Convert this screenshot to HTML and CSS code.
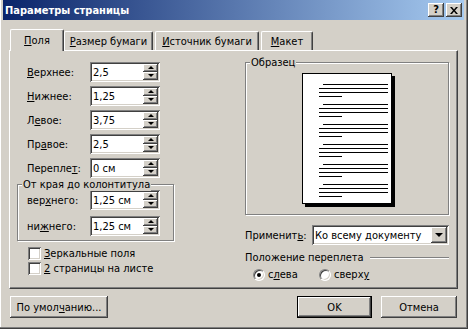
FILE: index.html
```html
<!DOCTYPE html>
<html lang="ru">
<head>
<meta charset="UTF-8">
<title>Параметры страницы</title>
<link rel="stylesheet" href="styles.css">
</head>
<body>

<div class="window">
  <!-- Title bar -->
  <div class="titlebar">
    <span class="title">Параметры страницы</span>
    <div class="title-btns">
      <span class="tbtn help">?</span>
      <span class="tbtn close">
        <svg width="8" height="7" viewBox="0 0 8 7"><path d="M0 0h2l2 2.5L6 0h2L5 3.5 8 7H6L4 4.5 2 7H0l3-3.5z" fill="#000"/></svg>
      </span>
    </div>
  </div>

  <!-- Tabs -->
  <div class="tabs">
    <div class="tab active"><u>П</u>оля</div>
    <div class="tab t-size"><u>Р</u>азмер бумаги</div>
    <div class="tab t-source"><u>И</u>сточник бумаги</div>
    <div class="tab t-layout"><u>М</u>акет</div>
  </div>

  <div class="panel">
    <div class="col-left">
      <div class="field"><span class="lbl"><u>В</u>ерхнее:</span>
        <div class="spin"><span class="val">2,5</span><div class="spin-btns"><span class="sb up"></span><span class="sb down"></span></div></div>
      </div>
      <div class="field"><span class="lbl"><u>Н</u>ижнее:</span>
        <div class="spin"><span class="val">1,25</span><div class="spin-btns"><span class="sb up"></span><span class="sb down"></span></div></div>
      </div>
      <div class="field"><span class="lbl">Л<u>е</u>вое:</span>
        <div class="spin"><span class="val">3,75</span><div class="spin-btns"><span class="sb up"></span><span class="sb down"></span></div></div>
      </div>
      <div class="field"><span class="lbl">Пр<u>а</u>вое:</span>
        <div class="spin"><span class="val">2,5</span><div class="spin-btns"><span class="sb up"></span><span class="sb down"></span></div></div>
      </div>
      <div class="field"><span class="lbl">Перепле<u>т</u>:</span>
        <div class="spin"><span class="val">0 см</span><div class="spin-btns"><span class="sb up"></span><span class="sb down"></span></div></div>
      </div>

      <!-- Header / footer distance -->
      <div class="group hf">
        <span class="group-label">От края до колонтитула</span>
        <div class="field"><span class="lbl">вер<u>х</u>него:</span>
          <div class="spin"><span class="val">1,25 см</span><div class="spin-btns"><span class="sb up"></span><span class="sb down"></span></div></div>
        </div>
        <div class="field"><span class="lbl">ни<u>ж</u>него:</span>
          <div class="spin"><span class="val">1,25 см</span><div class="spin-btns"><span class="sb up"></span><span class="sb down"></span></div></div>
        </div>
      </div>

      <div class="checks">
        <div class="check"><span class="box"></span><span><u>З</u>еркальные поля</span></div>
        <div class="check"><span class="box"></span><span><u>2</u> страницы на листе</span></div>
      </div>
    </div>

    <div class="col-right">
      <div class="group sample">
        <span class="group-label">Образец</span>
        <div class="page">
          <div class="para"><i class="ln first"></i><i class="ln"></i><i class="ln"></i><i class="ln short"></i></div>
          <div class="para"><i class="ln first"></i><i class="ln"></i><i class="ln"></i><i class="ln short"></i></div>
          <div class="para"><i class="ln first"></i><i class="ln"></i><i class="ln"></i><i class="ln short"></i></div>
          <div class="para"><i class="ln first"></i><i class="ln"></i><i class="ln"></i><i class="ln short"></i></div>
          <div class="para"><i class="ln first"></i><i class="ln"></i><i class="ln"></i><i class="ln short"></i></div>
          <div class="para"><i class="ln first"></i><i class="ln"></i><i class="ln"></i><i class="ln short"></i></div>
        </div>
      </div>

      <div class="apply">
        <span class="apply-lbl">Применит<u>ь</u>:</span>
        <div class="select"><span class="val">Ко всему документу</span><span class="drop"></span></div>
      </div>

      <div class="gutter-head"><span>Положение переплета</span><span class="rule"></span></div>
      <div class="radios">
        <div class="radio checked"><span class="dot"></span><span>с<u>л</u>ева</span></div>
        <div class="radio"><span class="dot"></span><span>сверх<u>у</u></span></div>
      </div>
    </div>
  </div>

  <!-- Dialog buttons -->
  <div class="buttons">
    <div class="btn b-default">По умол<u>ч</u>анию...</div>
    <div class="btn b-ok">OK</div>
    <div class="btn b-cancel">Отмена</div>
  </div>
</div>

</body>
</html>
```

FILE: styles.css
```css
* {
  box-sizing: border-box;
}

body {
  margin: 0;
  font-family: "DejaVu Sans Condensed", "DejaVu Sans", sans-serif;
  font-size: 11px;
  line-height: 13px;
  color: #000;
  background: #d4d0c8;
}

u {
  text-decoration: underline;
  text-underline-offset: 1px;
}

.window {
  width: 468px;
  height: 329px;
  background: #d4d0c8;
  padding: 0 3px 3px 3px;
  border-right: 1px solid #404040;
  border-bottom: 1px solid #404040;
  box-shadow: inset -1px -1px #808080, inset 1px 0 #fff;
}

/* Title bar */
.titlebar {
  height: 20px;
  display: flex;
  align-items: center;
  justify-content: space-between;
  padding: 0 2px 0 2px;
  background: linear-gradient(to right, #0a246a, #a6caf0);
}

.title {
  color: #fff;
  font-weight: bold;
  font-size: 11px;
}

.title-btns {
  display: flex;
  gap: 2px;
}

.tbtn {
  width: 16px;
  height: 14px;
  display: flex;
  align-items: center;
  justify-content: center;
  background: #d4d0c8;
  box-shadow: inset -1px -1px #404040, inset 1px 1px #fff, inset -2px -2px #808080;
  font-weight: bold;
  font-size: 11px;
  line-height: 14px;
}

/* Tabs */
.tabs {
  display: flex;
  align-items: flex-end;
  height: 30px;
  padding-left: 7px;
}

.tab {
  height: 19px;
  padding-top: 3px;
  text-align: center;
  margin-right: 1px;
  border-top: 1px solid #fff;
  border-left: 1px solid #fff;
  border-right: 1px solid #404040;
  border-radius: 2px 2px 0 0;
  box-shadow: inset -1px 0 #808080;
}

.tab.active {
  width: 54px;
  height: 22px;
  margin-right: 0;
  margin-bottom: -1px;
  padding-top: 4px;
  background: #d4d0c8;
  position: relative;
  z-index: 1;
}

.t-size { width: 89px; }
.t-source { width: 104px; margin-left: 1px; }
.t-layout { width: 52px; margin-left: 1px; }

/* Tab page */
.panel {
  height: 239px;
  margin: 0 6px;
  display: flex;
  padding: 11px 0 0 7px;
  border-top: 1px solid #fff;
  border-left: 1px solid #fff;
  border-right: 1px solid #404040;
  border-bottom: 1px solid #404040;
  box-shadow: inset -1px -1px #808080;
}

.col-left {
  width: 158px;
}

.col-right {
  width: 204px;
  margin-left: 70px;
}

.field {
  display: flex;
  align-items: center;
  height: 20px;
  margin-bottom: 4px;
  padding-left: 10px;
}

.lbl {
  width: 63px;
}

.spin {
  width: 70px;
  height: 20px;
  display: flex;
  align-items: center;
  padding: 2px 2px 2px 3px;
  background: #fff;
  box-shadow: inset 1px 1px #808080, inset -1px -1px #fff, inset 2px 2px #404040, inset -2px -2px #d4d0c8;
}

.spin .val {
  flex: 1;
}

.spin-btns {
  display: flex;
  flex-direction: column;
  width: 15px;
  height: 16px;
}

.sb {
  height: 8px;
  display: flex;
  align-items: center;
  justify-content: center;
  background: #d4d0c8;
  box-shadow: inset -1px -1px #404040, inset 1px 1px #fff, inset -2px -2px #808080;
}

.sb::after {
  content: "";
  width: 0;
  height: 0;
  border-left: 3px solid transparent;
  border-right: 3px solid transparent;
  margin-top: -1px;
}

.sb.up::after {
  border-bottom: 3px solid #000;
}

.sb.down::after {
  border-top: 3px solid #000;
}

/* Group boxes */
.group {
  position: relative;
  border: 1px solid #808080;
  box-shadow: inset 1px 1px #fff, 1px 1px #fff;
}

.group-label {
  position: absolute;
  top: -7px;
  left: 4px;
  padding: 0 1px;
  background: #d4d0c8;
}

.hf {
  width: 157px;
  margin-top: 6px;
  padding: 5px 0 0 0;
}

.hf .field {
  padding-left: 9px;
  margin-bottom: 6px;
}

.hf .field:last-child {
  margin-bottom: 4px;
}

.checks {
  margin-top: 5px;
  padding-left: 11px;
}

.check {
  display: flex;
  align-items: center;
  height: 15px;
}

.box {
  width: 13px;
  height: 13px;
  margin-right: 3px;
  background: #fff;
  box-shadow: inset 1px 1px #808080, inset -1px -1px #fff, inset 2px 2px #404040, inset -2px -2px #d4d0c8;
}

/* Sample page */
.sample {
  height: 153px;
  display: flex;
  justify-content: center;
  padding-top: 10px;
}

.page {
  width: 90px;
  height: 131px;
  background: #fff;
  border: 1px solid #000;
  box-shadow: 3px 3px 0 #000;
  padding-top: 10px;
}

.para {
  margin-bottom: 7px;
}

.ln {
  display: block;
  height: 1px;
  margin: 0 3px 3px 16px;
  background: #000;
}

.ln.first {
  margin-left: 20px;
}

.ln.short {
  width: 23px;
  margin-bottom: 0;
}

/* Apply to */
.apply {
  display: flex;
  align-items: center;
  margin-top: 10px;
  height: 20px;
}

.apply-lbl {
  width: 67px;
}

.select {
  width: 137px;
  height: 20px;
  display: flex;
  align-items: center;
  padding: 2px 2px 2px 3px;
  background: #fff;
  box-shadow: inset 1px 1px #808080, inset -1px -1px #fff, inset 2px 2px #404040, inset -2px -2px #d4d0c8;
}

.select .val {
  flex: 1;
}

.drop {
  width: 16px;
  height: 16px;
  display: flex;
  align-items: center;
  justify-content: center;
  background: #d4d0c8;
  box-shadow: inset -1px -1px #404040, inset 1px 1px #fff, inset -2px -2px #808080;
}

.drop::after {
  content: "";
  border-left: 4px solid transparent;
  border-right: 4px solid transparent;
  border-top: 4px solid #000;
}

/* Gutter position */
.gutter-head {
  display: flex;
  align-items: center;
  margin-top: 6px;
  height: 13px;
}

.rule {
  flex: 1;
  height: 2px;
  margin-left: 6px;
  border-top: 1px solid #808080;
  border-bottom: 1px solid #fff;
}

.radios {
  display: flex;
  margin-top: 4px;
  padding-left: 8px;
}

.radio {
  display: flex;
  align-items: center;
  height: 13px;
  width: 66px;
}

.radio .dot {
  width: 12px;
  height: 12px;
  margin-right: 3px;
  border-radius: 50%;
  background: #fff;
  border: 1px solid;
  border-color: #808080 #fff #fff #808080;
  box-shadow: inset 1px 1px #404040, inset -1px -1px #d4d0c8;
  display: flex;
  align-items: center;
  justify-content: center;
}

.radio.checked .dot::after {
  content: "";
  width: 4px;
  height: 4px;
  border-radius: 50%;
  background: #000;
}

/* Dialog buttons */
.buttons {
  display: flex;
  margin-top: 7px;
  padding: 0 7px;
}

.btn {
  height: 22px;
  display: flex;
  align-items: center;
  justify-content: center;
  background: #d4d0c8;
  box-shadow: inset -1px -1px #404040, inset 1px 1px #fff, inset -2px -2px #808080;
}

.b-default {
  width: 98px;
  margin-right: auto;
}

.b-ok {
  width: 75px;
  border: 1px solid #000;
}

.b-cancel {
  width: 76px;
  margin-left: 9px;
}
```
